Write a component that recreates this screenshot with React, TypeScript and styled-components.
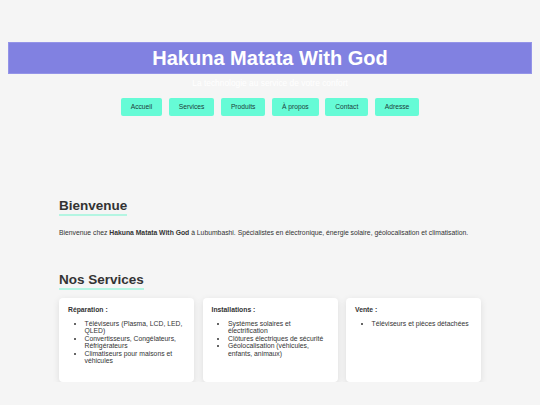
import React from "react";
import styled, { createGlobalStyle } from "styled-components";

const GlobalStyle = createGlobalStyle`
  body {
    margin: 0;
    background: #f5f5f5;
    font-family: "Liberation Sans", Arial, sans-serif;
    color: #333;
  }
`;

const Header = styled.header`
  margin: 42px 8px 0;
  display: flex;
  flex-direction: column;
  align-items: center;
`;

const TitleBar = styled.div`
  align-self: stretch;
  height: 32px;
  box-sizing: border-box;
  border: 1px solid #9494e8;
  background: #8181e1;
  display: flex;
  align-items: center;
  justify-content: center;
`;

const Title = styled.h1`
  margin: 0;
  font-size: 20px;
  font-weight: bold;
  color: #fff;
`;

const Subtitle = styled.p`
  margin: 4px 0 0;
  font-size: 8.4px;
  line-height: 10px;
  color: #fff;
`;

const Nav = styled.nav`
  margin-top: 10px;
  display: flex;
  gap: 6.5px;
`;

const NavButton = styled.a`
  display: flex;
  align-items: center;
  height: 17.5px;
  padding: 0 10px;
  border-radius: 2px;
  background: #66fbd6;
  color: #1d3b3b;
  font-size: 6.7px;
  text-decoration: none;
`;

const Main = styled.main`
  width: 422px;
  margin: 80px auto 0;
`;

const Section = styled.section`
  & + & {
    margin-top: 33px;
  }
`;

const Heading = styled.h2`
  display: inline-block;
  margin: 0;
  font-size: 13.5px;
  line-height: 16px;
  font-weight: bold;
  color: #333;
  border-bottom: 2px solid #b4f5e2;
`;

const Text = styled.p`
  margin: 12px 0 0;
  font-size: 6.8px;
  line-height: 9px;
  color: #333;
`;

const Cards = styled.div`
  margin-top: 8px;
  display: grid;
  grid-template-columns: repeat(3, 1fr);
  gap: 8.5px;
`;

const Card = styled.div`
  background: #fff;
  border-radius: 4px;
  box-shadow: 0 2px 7px rgba(0, 0, 0, 0.1);
  padding: 8px 9px 16px;
  min-height: 84px;
  box-sizing: border-box;
`;

const CardTitle = styled.p`
  margin: 0;
  font-size: 6.8px;
  line-height: 8px;
  font-weight: bold;
  color: #333;
`;

const List = styled.ul`
  margin: 6px 0 0;
  padding-left: 16.5px;
  font-size: 6.8px;
  line-height: 7.6px;
  color: #333;
`;

const services = [
  {
    title: "Réparation :",
    items: [
      "Téléviseurs (Plasma, LCD, LED, QLED)",
      "Convertisseurs, Congélateurs, Réfrigérateurs",
      "Climatiseurs pour maisons et véhicules",
    ],
  },
  {
    title: "Installations :",
    items: [
      "Systèmes solaires et électrification",
      "Clôtures électriques de sécurité",
      "Géolocalisation (véhicules, enfants, animaux)",
    ],
  },
  {
    title: "Vente :",
    items: ["Téléviseurs et pièces détachées"],
  },
];

const links = ["Accueil", "Services", "Produits", "À propos", "Contact", "Adresse"];

export default function App() {
  return (
    <>
      <GlobalStyle />
      <Header>
        <TitleBar>
          <Title>Hakuna Matata With God</Title>
        </TitleBar>
        <Subtitle>La technologie au service de votre confort</Subtitle>
        <Nav>
          {links.map((l) => (
            <NavButton key={l} href="#">
              {l}
            </NavButton>
          ))}
        </Nav>
      </Header>
      <Main>
        <Section>
          <Heading>Bienvenue</Heading>
          <Text>
            Bienvenue chez <strong>Hakuna Matata With God</strong> à Lubumbashi.
            Spécialistes en électronique, énergie solaire, géolocalisation et
            climatisation.
          </Text>
        </Section>
        <Section>
          <Heading>Nos Services</Heading>
          <Cards>
            {services.map((s) => (
              <Card key={s.title}>
                <CardTitle>{s.title}</CardTitle>
                <List>
                  {s.items.map((i) => (
                    <li key={i}>{i}</li>
                  ))}
                </List>
              </Card>
            ))}
          </Cards>
        </Section>
      </Main>
    </>
  );
}
